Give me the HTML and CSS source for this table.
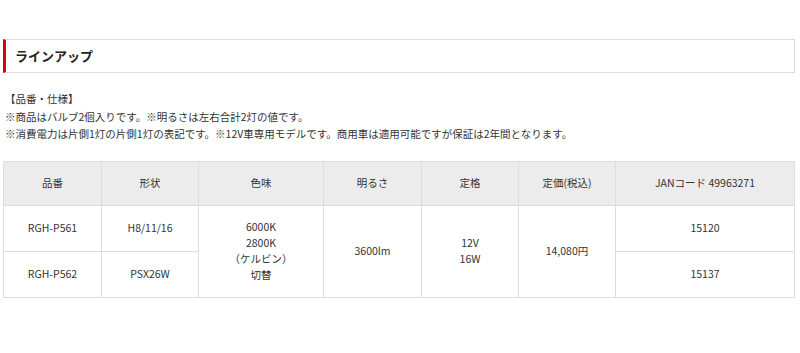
FILE: index.html
```html
<!DOCTYPE html>
<html lang="ja">
<head>
<meta charset="utf-8">
<link rel="stylesheet" href="styles.css">
</head>
<body>
<div class="page">
  <h2 class="heading">ラインアップ</h2>
  <div class="notes">
    <p>【品番・仕様】</p>
    <p>※商品はバルブ2個入りです。※明るさは左右合計2灯の値です。</p>
    <p>※消費電力は片側1灯の片側1灯の表記です。※12V車専用モデルです。商用車は適用可能ですが保証は2年間となります。</p>
  </div>
  <table class="spec">
    <colgroup>
      <col class="c1"><col class="c2"><col class="c3"><col class="c4"><col class="c5"><col class="c6"><col class="c7">
    </colgroup>
    <thead>
      <tr>
        <th>品番</th><th>形状</th><th>色味</th><th>明るさ</th><th>定格</th><th>定価(税込)</th><th>JANコード 49963271</th>
      </tr>
    </thead>
    <tbody>
      <tr>
        <td>RGH-P561</td>
        <td>H8/11/16</td>
        <td rowspan="2">6000K<br>2800K<br>（ケルビン）<br>切替</td>
        <td rowspan="2">3600lm</td>
        <td rowspan="2">12V<br>16W</td>
        <td rowspan="2">14,080円</td>
        <td>15120</td>
      </tr>
      <tr>
        <td>RGH-P562</td>
        <td>PSX26W</td>
        <td>15137</td>
      </tr>
    </tbody>
  </table>
</div>
</body>
</html>
```

FILE: styles.css
```css
html, body {
  margin: 0;
  padding: 0;
  background: #fff;
}
body {
  font-family: "Noto Sans CJK JP", "Noto Sans", sans-serif;
  color: #333;
  font-size: 10.5px;
}
.page {
  padding: 39px 5px 0 3px;
}
.heading {
  margin: 0;
  height: 34px;
  box-sizing: border-box;
  border: 1px solid #ddd;
  border-left: 3px solid #d7000f;
  padding: 0 0 0 9px;
  font-size: 13px;
  font-weight: bold;
  line-height: 32px;
  color: #222;
}
.notes {
  margin-top: 17px;
  padding-left: 2px;
}
.notes p {
  margin: 0;
  line-height: 17.5px;
}
.spec {
  margin-top: 18px;
  width: 791px;
  border-collapse: collapse;
  table-layout: fixed;
}
.spec th, .spec td {
  border: 1px solid #ddd;
  text-align: center;
  vertical-align: middle;
  font-weight: normal;
  line-height: 16px;
  padding: 0;
}
.spec th {
  background: #ececec;
  height: 43px;
}
.spec td {
  height: 45px;
}
.c1 { width: 98px; }
.c2 { width: 97px; }
.c3 { width: 125px; }
.c4 { width: 98px; }
.c5 { width: 97px; }
.c6 { width: 97px; }
.c7 { width: 179px; }
```
